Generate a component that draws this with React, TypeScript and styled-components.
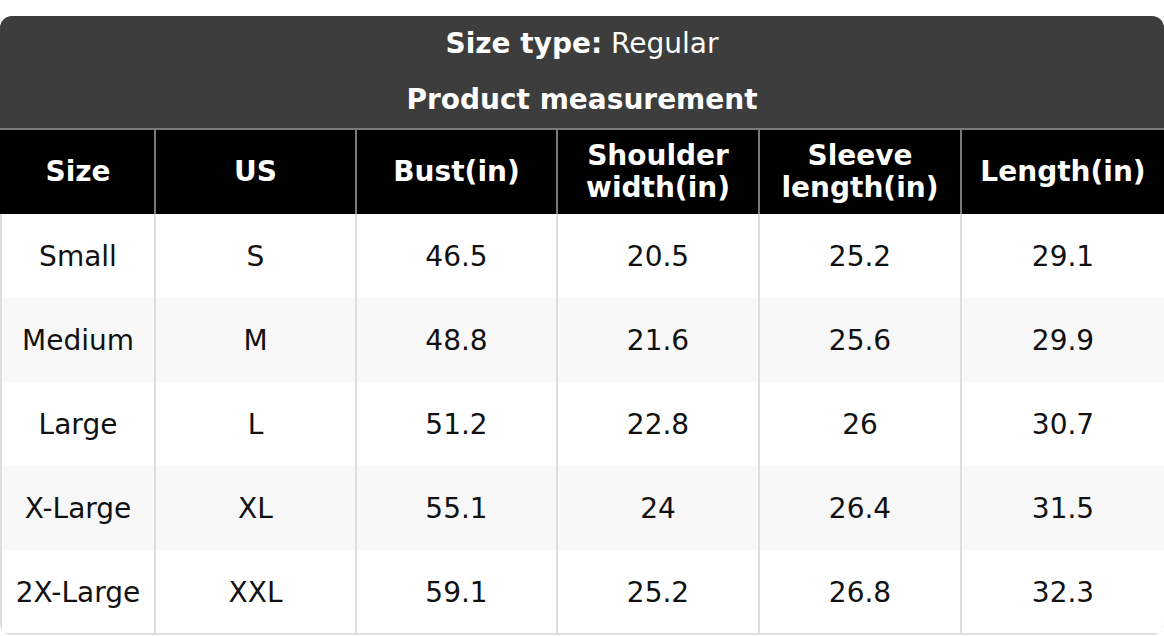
import React from 'react'
import styled, { createGlobalStyle } from 'styled-components'

type Row = {
    size: string
    us: string
    bust: string
    shoulder: string
    sleeve: string
    length: string
}

const rows: Row[] = [
    { size: 'Small', us: 'S', bust: '46.5', shoulder: '20.5', sleeve: '25.2', length: '29.1' },
    { size: 'Medium', us: 'M', bust: '48.8', shoulder: '21.6', sleeve: '25.6', length: '29.9' },
    { size: 'Large', us: 'L', bust: '51.2', shoulder: '22.8', sleeve: '26', length: '30.7' },
    { size: 'X-Large', us: 'XL', bust: '55.1', shoulder: '24', sleeve: '26.4', length: '31.5' },
    { size: '2X-Large', us: 'XXL', bust: '59.1', shoulder: '25.2', sleeve: '26.8', length: '32.3' },
]

const colWidths = [154, 201, 201, 202, 202, 204]

const GlobalStyle = createGlobalStyle`
  html, body {
    margin: 0;
    padding: 0;
    background: #fff;
    font-family: "DejaVu Sans", "Liberation Sans", sans-serif;
  }
`

function App() {
    return (
        <>
            <GlobalStyle />
            <Page>
                <Chart>
                    <Caption>
                        <CaptionLine>
                            <strong>Size type:</strong> Regular
                        </CaptionLine>
                        <CaptionLine>
                            <strong>Product measurement</strong>
                        </CaptionLine>
                    </Caption>
                    <Table>
                        <colgroup>
                            {colWidths.map((w, i) => (
                                <col key={i} style={{ width: w }} />
                            ))}
                        </colgroup>
                        <thead>
                            <tr>
                                <Th>Size</Th>
                                <Th>US</Th>
                                <Th>Bust(in)</Th>
                                <Th>Shoulder<br />width(in)</Th>
                                <Th>Sleeve<br />length(in)</Th>
                                <Th>Length(in)</Th>
                            </tr>
                        </thead>
                        <tbody>
                            {rows.map((r, i) => (
                                <Tr key={r.size} $striped={i % 2 === 1}>
                                    <Td>{r.size}</Td>
                                    <Td>{r.us}</Td>
                                    <Td>{r.bust}</Td>
                                    <Td>{r.shoulder}</Td>
                                    <Td>{r.sleeve}</Td>
                                    <Td>{r.length}</Td>
                                </Tr>
                            ))}
                        </tbody>
                    </Table>
                </Chart>
            </Page>
        </>
    )
}

const Page = styled.div`
  padding-top: 16px;
  width: 1164px;
`

const Chart = styled.div`
  border-radius: 12px;
  overflow: hidden;
  box-shadow: inset 0 0 0 2px #dedede;
`

const Caption = styled.div`
  background: #3d3d3d;
  color: #fff;
  display: flex;
  flex-direction: column;
  align-items: center;
  gap: 24px;
  padding: 12px 0 12px;
  font-size: 28px;
  line-height: 32px;
  strong {
    font-weight: 700;
  }
`

const CaptionLine = styled.div`
  text-align: center;
`

const Table = styled.table`
  width: 1164px;
  table-layout: fixed;
  border-collapse: collapse;
  font-size: 28px;
  line-height: 32px;
  color: #111;
`

const Th = styled.th`
  height: 85px;
  padding: 0 6px;
  background: #000;
  color: #fff;
  font-weight: 700;
  text-align: center;
  vertical-align: middle;
  border-top: 2px solid #7a7a7a;
  border-left: 2px solid #7a7a7a;
  border-right: 2px solid #7a7a7a;
  box-sizing: border-box;
  &:first-child {
    border-left-color: #000;
  }
  &:last-child {
    border-right-color: #000;
  }
`

const Tr = styled.tr<{ $striped: boolean }>`
  background: ${(p) => (p.$striped ? '#f8f8f8' : '#fff')};
  &:last-child td {
    border-bottom: 2px solid #dedede;
  }
`

const Td = styled.td`
  height: 84px;
  padding: 2px 6px 0;
  text-align: center;
  vertical-align: middle;
  font-weight: 400;
  color: #111;
  border-left: 2px solid #dedede;
  border-right: 2px solid #dedede;
  box-sizing: border-box;
`

export default App
